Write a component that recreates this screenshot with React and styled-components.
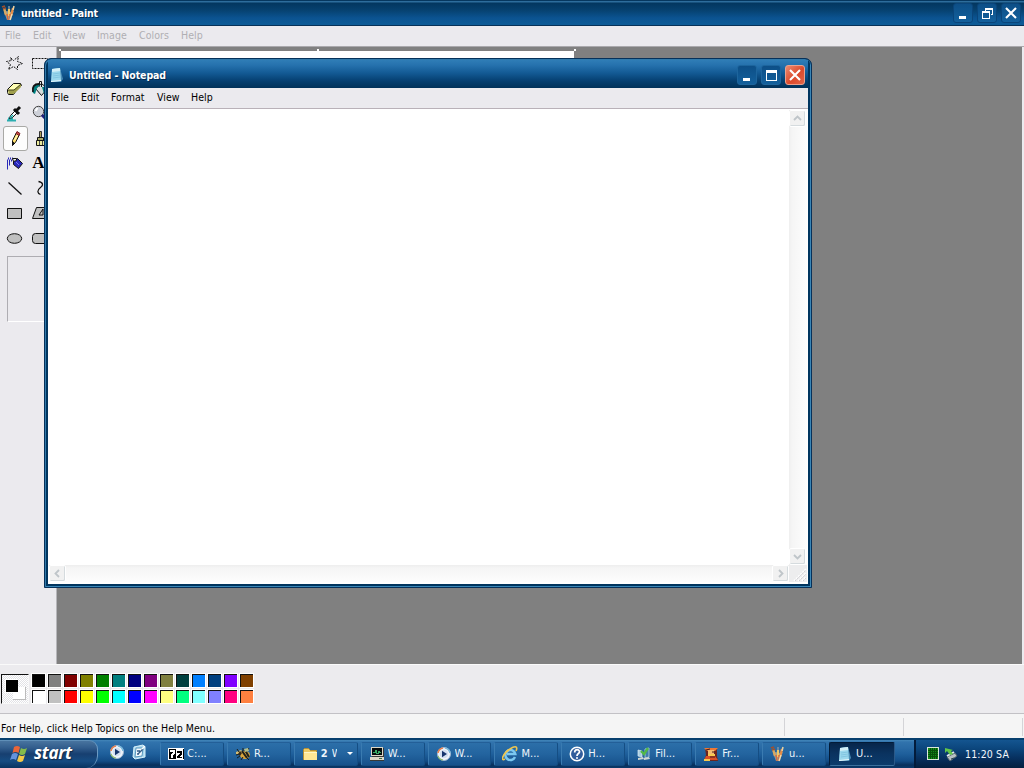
import React from 'react';
import styled, { createGlobalStyle, css } from 'styled-components';

const GlobalStyle = createGlobalStyle`
  * {
    box-sizing: border-box;
  }

  body {
    margin: 0;
    overflow: hidden;
    font-family: 'DejaVu Sans Condensed', 'DejaVu Sans', sans-serif;
    font-stretch: condensed;
    font-size: 10.5px;
    color: #000;
  }

  svg {
    display: block;
    flex: none;
  }
`;

const StyledDesktop = styled.div`
  position: relative;
  display: flex;
  flex-direction: column;
  width: 1024px;
  height: 768px;
  overflow: hidden;
  background: #ebeaee;
`;

const StyledTitleBar = styled.header`
  display: flex;
  align-items: center;
  flex: none;
  height: 26px;
  padding: 0 3px 0 1px;
  border-bottom: 1px solid #063158;
  background: linear-gradient(
    #06375f 0,
    #06375f 1px,
    #2d6d9c 1px,
    #2d6d9c 2px,
    #03365f 3px,
    #06416f 10px,
    #0b5391 18px,
    #0d5b96 24px
  );

  ${({ $floating }) =>
    $floating &&
    css`
      height: 28px;
      padding: 1px 3px 0 1px;
      border-bottom: 0;
      background: linear-gradient(#2f7db6 0, #2672ae 5px, #135a94 13px, #053f70 21px, #003158 28px);
    `}
`;

const StyledTitle = styled.h1`
  flex: 1;
  margin: 0 0 0 4px;
  font-size: 10.5px;
  font-weight: bold;
  line-height: 14px;
  letter-spacing: ${({ $spacing }) => $spacing || -0.2}px;
  color: #fff;
  text-shadow: 1px 1px 0 #032a50;
  white-space: pre;
`;

const StyledWindowButtons = styled.div`
  display: flex;
  gap: 4px;
`;

const StyledWindowButton = styled.button`
  display: flex;
  align-items: center;
  justify-content: center;
  width: 20px;
  height: 20px;
  padding: 0;
  border: 1px solid ${({ $close, $dim }) => ($close ? '#e9a18e' : $dim ? '#0a457a' : '#1d659d')};
  border-radius: 3px;
  background: ${({ $close }) =>
    $close
      ? 'linear-gradient(135deg, #ec8a70, #dc4a2c 55%, #e2654a)'
      : 'linear-gradient(#0d4f87, #13609c)'};
`;

const StyledMenuBar = styled.nav`
  display: flex;
  flex: none;
  height: 20px;
  padding-left: 5px;
  line-height: 19px;
  color: ${({ $inactive }) => ($inactive ? '#b0afb3' : '#000')};
  background: #ebeaee;
`;

const StyledMenuItem = styled.span`
  width: ${({ $width }) => $width}px;
  white-space: nowrap;
  letter-spacing: 0.05px;
`;

const StyledWorkspace = styled.main`
  display: flex;
  flex: none;
  height: 618px;
  border-top: 1px solid #aaa9ad;
`;

const StyledToolBox = styled.aside`
  flex: none;
  width: 57px;
  padding: 4px 3px;
  background: #ebeaee;
  border-right: 1px solid #b6b6ba;
`;

const StyledToolGrid = styled.div`
  display: grid;
  grid-template-columns: 25px 25px;
  grid-auto-rows: 25px;
`;

const StyledTool = styled.div`
  display: flex;
  align-items: center;
  justify-content: center;
  padding: 0 2px 1px 0;
  border: 1px solid ${({ $active }) => ($active ? '#a9a9a6' : 'transparent')};
  border-radius: 3px;
  background: ${({ $active }) => ($active ? '#fdfdfd' : 'transparent')};
`;

const StyledLetter = styled.span`
  padding-right: 2px;
  font-family: 'Liberation Serif', serif;
  font-size: 17px;
  font-weight: bold;
  line-height: 20px;
`;

const StyledToolOptions = styled.div`
  width: 42px;
  height: 66px;
  margin: 5px 0 0 4px;
  border: 1px solid #aeadb2;
  border-right-color: #fff;
  border-bottom-color: #fff;
`;

const StyledCanvasArea = styled.div`
  flex: 1;
  margin-right: 2px;
  padding: 4px 0 0 4px;
  background: #808080;
`;

const StyledSheet = styled.div`
  position: relative;
  width: 513px;
  height: 400px;
  background: #fff;
`;

const StyledHandle = styled.i`
  position: absolute;
  top: -2px;
  left: ${({ $left }) => $left}px;
  width: 2px;
  height: 2px;
  background: #fff;
`;

const StyledColorBox = styled.section`
  display: flex;
  flex: none;
  gap: 2px;
  height: 50px;
  padding: 9px 0 0 1px;
  border-top: 1px solid #fafafa;
  border-bottom: 1px solid #c2c1c5;
  background: #ecebee;
`;

const StyledCurrent = styled.div`
  width: 28px;
  height: 30px;
  border: 1px solid #111;
  border-right-color: #f8f8f8;
  border-bottom-color: #f8f8f8;
  background: repeating-conic-gradient(#fff 0 25%, #e2e2e6 0 50%) 0 0 / 2px 2px;
`;

const StyledPalette = styled.div`
  display: grid;
  grid-template-columns: repeat(14, 16px);
  grid-auto-rows: 16px;
  height: 32px;
  margin-top: -1px;
`;

const StyledSwatch = styled.div`
  width: 15px;
  height: 15px;
  border: 1px solid #fff;
  box-shadow: inset 1px 1px 0 #111;
  background: ${({ $color }) => $color};
`;

const StyledStatusBar = styled.footer`
  display: flex;
  flex: none;
  height: 24px;
  padding: 4px 1px 2px;
  background: #f5f5f5;
  line-height: 20px;
`;

const StyledStatusCell = styled.div`
  width: ${({ $width }) => $width}px;
  border-right: 1px solid #d4d4d7;
  white-space: nowrap;
  letter-spacing: 0.04px;
`;

const StyledTaskBar = styled.div`
  display: flex;
  flex: none;
  height: 30px;
  border-top: 2px solid #07406e;
  background: linear-gradient(
    #4386b9 0,
    #3173ad 2px,
    #296aa5 8px,
    #1e5f9b 14px,
    #124c86 21px,
    #08305d 25px,
    #0b396a 28px
  );
`;

const StyledStart = styled.button`
  display: flex;
  align-items: center;
  gap: 6px;
  width: 98px;
  padding: 0 0 3px 10px;
  border: 0;
  border-top: 1px solid #5f8fb8;
  border-right: 1px solid #6c9bc3;
  border-radius: 0 9px 12px 0;
  background: linear-gradient(#48749f 0, #315c8c 7px, #173f70 13px, #164c82 20px, #07305b 28px);
  color: #fff;
  font: italic bold 17px 'Open Sans', sans-serif;
  line-height: 20px;
  letter-spacing: -0.3px;
  text-shadow: 1px 1px 1px #102947;
`;

const StyledQuickLaunch = styled.div`
  display: flex;
  gap: 6px;
  width: 62px;
  padding: 4px 0 0 11px;
`;

const StyledTasks = styled.div`
  display: flex;
  flex: 1;
  gap: 3px;
  padding-top: 2px;
`;

const StyledTask = styled.button`
  display: flex;
  align-items: center;
  flex: none;
  width: 63.9px;
  height: 24px;
  padding: 0 4px 1px 7px;
  border: 1px solid #235f98;
  border-left-color: #3a7bb1;
  border-right-color: #154e84;
  border-bottom-color: #154b80;
  border-radius: 2px;
  background: linear-gradient(#2c6fa9, #23649f 50%, #17518b);
  color: #eef6fc;
  font: inherit;
  font-size: 11px;
  text-align: left;

  ${({ $active }) =>
    $active &&
    css`
      width: 66px;
      border-color: #021b38 #2b5988 #3c709c #021b38;
      background: linear-gradient(#07264a, #0a3360 50%, #0c3b6b);
    `}

  span {
    flex: 1;
    margin-left: 3px;
    overflow: hidden;
    white-space: nowrap;
  }
`;

const StyledCount = styled.b`
  flex: none;
  margin: 0 4px 0 3px;
`;

const StyledGroupLabel = styled.em`
  width: 7px;
  margin-right: 10px;
  overflow: hidden;
  font-style: normal;
`;

const StyledTray = styled.div`
  display: flex;
  align-items: center;
  width: 110px;
  padding: 0 0 1px 11px;
  border-left: 2px solid #031c3b;
  background: linear-gradient(#145590 0, #0c477e 8px, #07305f 18px, #04203f 28px);
  color: #f2f7fc;
  letter-spacing: 0.15px;
  white-space: nowrap;

  svg + svg {
    margin: 0 7px 0 5px;
  }
`;

const StyledNotepad = styled.section`
  position: absolute;
  top: 58px;
  left: 44px;
  display: flex;
  flex-direction: column;
  width: 768px;
  height: 530px;
  padding: 1px 3px 3px;
  border: 1px solid #06315a;
  border-radius: 7px 7px 0 0;
  background: #00355f;
  box-shadow: inset 1px 1px 0 #317aaa, inset -1px -1px 0 #3a86b6;
  overflow: hidden;
`;

const StyledEditor = styled.div`
  display: grid;
  grid-template-columns: 1fr 18px;
  grid-template-rows: 1fr 17px;
  flex: 1;
  padding: 1px 1px 2px 1px;
  border-top: 1px solid #b9b1b8;
  background: #fff;
`;

const StyledPage = styled.div`
  background: #fff;
`;

const StyledScrollBar = styled.div`
  display: flex;
  flex-direction: ${({ $vertical }) => ($vertical ? 'column' : 'row')};
  justify-content: space-between;
  background: ${({ $vertical }) =>
    $vertical
      ? 'linear-gradient(90deg, #efefef, #f5f5f5 3px, #fdfdfd)'
      : 'linear-gradient(#eeeeee, #f5f5f5 3px, #fdfdfd)'};
`;

const StyledArrow = styled.div`
  display: flex;
  align-items: center;
  justify-content: center;
  width: 17px;
  height: 17px;
  border: 1px solid #fff;
  border-radius: 2px;
  background: #f1f1f1;
  box-shadow: inset -1px -1px 0 #d5dbde;
`;

const StyledCorner = styled.div`
  display: flex;
  align-items: flex-end;
  justify-content: flex-end;
  background: #ededee;
`;

const topColors = [
  '#000000', '#808080', '#800000', '#808000', '#008000', '#008080', '#000080',
  '#800080', '#808040', '#004040', '#0080ff', '#004080', '#8000ff', '#804000',
];

const bottomColors = [
  '#ffffff', '#c0c0c0', '#ff0000', '#ffff00', '#00ff00', '#00ffff', '#0000ff',
  '#ff00ff', '#ffff80', '#00ff80', '#80ffff', '#8080ff', '#ff0080', '#ff8040',
];

const PaintIcon = () => (
  <svg width="16" height="16" viewBox="0 0 16 16">
    <path d="M3 7l3-1 3 1 4-1-2 5-1 4H6z" fill="#8e9fa0" />
    <path d="M5 10L3 3" stroke="#d8a862" strokeWidth="2.4" />
    <path d="M1 2l3-1M2 4l3-1" stroke="#a2502b" strokeWidth="1.6" />
    <path d="M8 11V4" stroke="#f2c765" strokeWidth="2.2" />
    <path d="M8 4V1" stroke="#7f93a5" strokeWidth="1.5" />
    <path d="M10 11l2-8" stroke="#e88c45" strokeWidth="2.2" />
    <path d="M12 5l1-4" stroke="#ead0a0" strokeWidth="1.6" />
    <path d="M6 9l1 6M9 9v6" stroke="#d66b3c" strokeWidth="1.5" />
    <path d="M11 9l-2 6" stroke="#f3dfb0" strokeWidth="1.3" />
  </svg>
);

const NotepadIcon = () => (
  <svg width="16" height="16" viewBox="0 0 16 16">
    <path d="M3 2l8-1 3 11-2 3H2z" fill="#4b8cb5" />
    <path d="M3 2l8-1 1 13-10 1z" fill="#9bd8ed" />
    <path d="M3 2l8-1 .2 3L3 5z" fill="#d3eff7" />
    <path d="M4 7l7-1M4 9l7-1M4 11l7-1" stroke="#77bddb" strokeWidth=".7" />
    <path d="M2 14.5l10-1" stroke="#e8f7fa" />
  </svg>
);

const MinimizeGlyph = () => (
  <svg width="16" height="16" viewBox="0 0 16 16" shapeRendering="crispEdges">
    <path d="M4 11h7v3H4z" fill="#fff" />
  </svg>
);

const MaximizeGlyph = () => (
  <svg width="16" height="16" viewBox="0 0 16 16" shapeRendering="crispEdges">
    <path d="M3 3h11v11H3zM4 6v7h9V6z" fill="#fff" fillRule="evenodd" />
  </svg>
);

const RestoreGlyph = () => (
  <svg width="16" height="16" viewBox="0 0 16 16" shapeRendering="crispEdges">
    <path d="M6 3h8v7h-2V9h1V5H7v1H6zM3 6h8v8H3zM4 8v5h6V8z" fill="#fff" fillRule="evenodd" />
  </svg>
);

const CloseGlyph = () => (
  <svg width="16" height="16" viewBox="0 0 16 16">
    <path d="M3 3l10 10M13 3L3 13" stroke="#fff" strokeWidth="2.1" />
  </svg>
);

const toolIcons = [
  <path key="star" d="M5.5 3.5l3 3 5-4-1 5 5 2-5 2v4l-4-3-5 3 2-5-4-3 5-1z" stroke="#111" strokeDasharray="2 1" />,
  <path key="select" d="M2.5 4.5h15v10h-15z" stroke="#111" strokeDasharray="2 1" />,
  <g key="eraser">
    <path d="M2.5 10.5l6-6h7l1 2-6 6-2 3h-5l-1-2z" fill="#ffffb4" stroke="#111" />
    <path d="M3 11h6v4H4zM9 11l7-6v3l-6 6H9z" fill="#a0a04e" />
    <path d="M3 11h6l7-6" stroke="#44441b" />
  </g>,
  <g key="fill">
    <path d="M5.5 9.5l6-5 6 5-6 7z" fill="#d7dddd" stroke="#111" />
    <path d="M11.5 8V2.5h-2v5" stroke="#111" />
    <path d="M3 14c-1-5 1-9 7-8l-3 3-2 6zM12 8h6l-4 7z" fill="#008080" />
    <path d="M3 13c-1-5 1-8 6-8" stroke="#111" strokeWidth="1.8" />
  </g>,
  <g key="picker">
    <path d="M2 16.5h9M3 14.5h5" stroke="#2caeb0" strokeWidth="2" />
    <path d="M4.5 14.5l1-3 5-5 2 2-5 5z" fill="#fff" stroke="#111" />
    <path d="M9 5l5 5M11 7l4-4" stroke="#111" strokeWidth="3" />
    <path d="M5 14l3-3" stroke="#20b4b4" strokeWidth="1.4" />
  </g>,
  <g key="zoom">
    <circle cx="8.5" cy="7.5" r="5.2" fill="#cdd0d8" stroke="#444" />
    <path d="M5.5 7l2-3" stroke="#fff" strokeWidth="2" />
    <path d="M12 11l5 5" stroke="#202080" strokeWidth="3" />
  </g>,
  <g key="pencil">
    <path d="M7.5 11.5l4-8 3 2-4 8-3 3z" fill="#ffe06d" stroke="#111" />
    <path d="M12 2.5l3 2-1 2-3-2z" fill="#c34848" stroke="#7c1e22" />
    <path d="M7 12l3 2-3 3z" fill="#111" />
    <path d="M9.5 11l3-5" stroke="#fff8ce" />
  </g>,
  <g key="brush">
    <path d="M9.5 2.5h2v6h-2z" fill="#ad9e54" stroke="#333" />
    <path d="M7.5 8.5h6v3h-6z" fill="#a9a96c" stroke="#111" />
    <path d="M6.5 11.5h9v5h-9z" fill="#e9e99c" stroke="#111" />
    <path d="M9.5 12v4M12.5 12v4" stroke="#444" />
  </g>,
  <g key="spray">
    <path d="M3 4.5h6M2 6.5h5M2 8.5h4M2 10.5h4M2 12.5h2M2 14.5h2" stroke="#2929b8" strokeDasharray="1 1" strokeWidth="2" />
    <path d="M8.5 6.5l4-2 5 5-4 5-5-4z" fill="#2929bb" stroke="#111" />
    <path d="M7.5 4.5h4v2l-3 1z" fill="#eee" stroke="#111" />
    <path d="M11 8l3 3" stroke="#7777ee" />
  </g>,
  null,
  <path key="line" d="M3.5 3.5l13 12" stroke="#111" strokeWidth="1.3" />,
  <path key="curve" d="M8.5 2.5c5 1 5 4 2 6-4 3-3 6 0 7" stroke="#111" strokeWidth="1.3" />,
  <path key="rect" d="M2.5 4.5h14v10h-14z" fill="#c0c0c0" stroke="#111" />,
  <path key="polygon" d="M6.5 3.5h11l-1 11h-14zM9 11l4-6v6z" fill="#c0c0c0" stroke="#111" />,
  <ellipse key="ellipse" cx="9.5" cy="9.5" rx="7.2" ry="4.8" fill="#c0c0c0" stroke="#111" />,
  <rect key="rounded" x="2.5" y="4.5" width="15" height="10" rx="3" fill="#c0c0c0" stroke="#111" />,
];

const FlagIcon = () => (
  <svg width="18" height="19" viewBox="0 0 18 19">
    <path d="M4 3q3-2 6 0L8.500 9q-3-2-6 0z" fill="#e96538" />
    <path d="M11 4q3 2 6 0l-2 6q-3 2-6 0z" fill="#84bb4b" />
    <path d="M2 10q3-2 6 0l-2 6q-3-2-6 0z" fill="#6493dc" />
    <path d="M9 11q3 2 6 0l-2 6q-3 2-6 0z" fill="#f5c946" />
  </svg>
);

const MediaIcon = () => (
  <svg width="16" height="16" viewBox="0 0 16 16">
    <circle cx="8" cy="8" r="6.5" fill="#f0f5fb" stroke="#9eb7d1" />
    <path d="M2 7a6 6 0 0 1 5-5" fill="none" stroke="#e78050" strokeWidth="1.6" />
    <path d="M9 2a6 6 0 0 1 5 5" fill="none" stroke="#78b8dc" strokeWidth="1.6" />
    <path d="M2 10a6 6 0 0 0 5 4" fill="none" stroke="#90bd72" strokeWidth="1.2" />
    <circle cx="8" cy="8" r="4.3" fill="#d3e0f1" />
    <path d="M6 4.800L11 8 6 11.200z" fill="#17366d" />
  </svg>
);

const DesktopIcon = () => (
  <svg width="16" height="16" viewBox="0 0 16 16">
    <path d="M3 3l9-2 2 2v10l-10 2-2-2z" fill="#a9d8ef" stroke="#d9f2fa" />
    <path d="M5 4h7l-1 8-7 1z" fill="#f5fbff" stroke="#5696bd" />
    <path d="M7 10l5-5M6 7h3M6 10h2" stroke="#315c87" strokeWidth="1.4" />
    <path d="M11 5l3-3" stroke="#fff" strokeWidth="1.5" />
  </svg>
);

const SevenZipIcon = () => (
  <svg width="16" height="16" viewBox="0 0 16 16" shapeRendering="crispEdges">
    <path d="M0 2h16v12H0z" fill="#fff" />
    <path d="M1 3h7v10H1z" fill="#000" />
    <path d="M2 4h5v3L5 9v3H3V9l2-3H2z" fill="#fff" />
    <path d="M15 3v10" stroke="#000" />
    <path d="M9 5h5v3l-3 3h3v1H9v-2l3-3H9z" fill="#000" />
  </svg>
);

const InsectIcon = () => (
  <svg width="16" height="16" viewBox="0 0 16 16">
    <path d="M1 6l5-2 3 3-3 2-5-1z" fill="#d8bd72" />
    <ellipse cx="10" cy="9" rx="5" ry="4" fill="#d9a53c" />
    <path d="M7 5l5 7M10 4l4 7" stroke="#1f221b" strokeWidth="2" />
    <path d="M5 8L1 9M5 10l-3 2M8 11l-2 3M12 12l2 2M4 6L2 3M12 5l2-3M8 5V2" stroke="#191d1b" />
    <path d="M5 5l2 2-2 3-2-2z" fill="#342b1b" />
    <path d="M9 3l4-1 1 3-4 1z" fill="#b3bd89" />
  </svg>
);

const FolderIcon = () => (
  <svg width="16" height="16" viewBox="0 0 16 16">
    <path d="M1.5 3.5l1-1h4l2 2h6v9h-13z" fill="#edca65" stroke="#b89033" />
    <path d="M2 6h13v8H2z" fill="#ffe794" />
    <path d="M2 6.5h13" stroke="#fff6c9" />
  </svg>
);

const MonitorIcon = () => (
  <svg width="16" height="16" viewBox="0 0 16 16" shapeRendering="crispEdges">
    <path d="M2 1h12v9H2zM1 11h14v4H1z" fill="#ded8c8" />
    <path d="M3 2h10v7H3z" fill="#050b0c" />
    <path d="M4 6h2V4h1v3h2V5h1v1h2" stroke="#39a863" fill="none" />
    <path d="M3 10.5h11M1 14.5h14M14.5 2v9" stroke="#393936" />
    <path d="M10 12.5h3" stroke="#3d6d48" />
  </svg>
);

const ExplorerIcon = () => (
  <svg width="16" height="16" viewBox="0 0 16 16">
    <path d="M13 11a5 5 0 1 1 .3-3H5" fill="none" stroke="#7cc8f0" strokeWidth="2.5" />
    <path d="M3 13C-2 16 1 7 8 3c6-4 8-2 6 2" fill="none" stroke="#efc64f" strokeWidth="1.6" />
  </svg>
);

const HelpIcon = () => (
  <svg width="16" height="16" viewBox="0 0 16 16">
    <circle cx="8" cy="8" r="6.7" fill="#315d9c" stroke="#fff" strokeWidth="1.5" />
    <path d="M5.700 6.400c0-4 5-3 4.800-.6C10.500 7.700 8 7.400 8 10" fill="none" stroke="#fff" strokeWidth="1.8" />
    <circle cx="8" cy="12" r="1" fill="#fff" />
  </svg>
);

const NetworkIcon = () => (
  <svg width="16" height="16" viewBox="0 0 16 16">
    <path d="M2 4l4 1v6l-4-1z" fill="#a9cee2" stroke="#e0edf3" strokeWidth=".7" />
    <path d="M9 3l4-1v9l-4 1z" fill="#427eac" stroke="#cadfe8" strokeWidth=".7" />
    <path d="M2 12l5-1 1 2-6 1zM8 12l5-1 1 2-6 1z" fill="#ced6d3" />
    <path d="M5 5l3 3 4-6" fill="none" stroke="#51b847" strokeWidth="2.4" />
  </svg>
);

const CharacterIcon = () => (
  <svg width="16" height="16" viewBox="0 0 16 16">
    <path d="M2 2h12v8l1 5H1l2-6z" fill="#6d251e" />
    <path d="M1 2h14l-3 3H4z" fill="#ed7834" />
    <path d="M5 4h6v4H8L5 9z" fill="#f5bb6f" />
    <path d="M3 10h9l3 4H1z" fill="#da5028" />
    <path d="M5 8h7v2H5zM1 13h6v2H1z" fill="#f6ca4f" />
    <path d="M3 4l4-1M9 6h2M7 11h5" stroke="#421b1c" />
  </svg>
);

const GridIcon = () => (
  <svg width="12" height="13" viewBox="0 0 12 13" shapeRendering="crispEdges">
    <path d="M.5.5h11v12H.5z" fill="#128a18" stroke="#dce8db" />
    <path d="M3.5 1v11M5.5 1v11M7.5 1v11M9.5 1v11M1 3.5h10M1 5.5h10M1 7.5h10M1 9.500h10" stroke="#07500b" />
  </svg>
);

const EjectIcon = () => (
  <svg width="14" height="16" viewBox="0 0 14 16">
    <path d="M3 11l8-4 2 3-7 5z" fill="#b9c2c4" stroke="#53646e" />
    <path d="M3 10l7-4" stroke="#e2e9eb" strokeWidth="2" />
    <path d="M1 2l8 2-2 1 2 3-3 1-3-4-2 2z" fill="#61c64a" />
    <path d="M7 13l3-1" stroke="#304653" />
  </svg>
);

const ArrowGlyph = ({ turn = 0 }) => (
  <svg width="11" height="11" viewBox="0 0 11 11">
    <path
      d="M2 7l3.5-3.5L9 7"
      fill="none"
      stroke="#bfc5c9"
      strokeWidth="1.8"
      transform={`rotate(${turn} 5.5 5.5)`}
    />
  </svg>
);

const paintMenu = [
  ['File', 28],
  ['Edit', 30],
  ['View', 34],
  ['Image', 42],
  ['Colors', 42],
  ['Help', 30],
];

const notepadMenu = [
  ['File', 28],
  ['Edit', 30],
  ['Format', 46],
  ['View', 34],
  ['Help', 30],
];

const tasks = [
  { icon: <SevenZipIcon />, label: 'C:...' },
  { icon: <InsectIcon />, label: 'R...' },
  { icon: <FolderIcon />, label: 'W', count: '2' },
  { icon: <MonitorIcon />, label: 'W...' },
  { icon: <MediaIcon />, label: 'W...' },
  { icon: <ExplorerIcon />, label: 'M...' },
  { icon: <HelpIcon />, label: 'H...' },
  { icon: <NetworkIcon />, label: 'Fil...' },
  { icon: <CharacterIcon />, label: 'Fr...' },
  { icon: <PaintIcon />, label: 'u...' },
  { icon: <NotepadIcon />, label: 'U...', active: true },
];

const Paint = () => (
  <>
    <StyledTitleBar>
      <PaintIcon />
      <StyledTitle>untitled - Paint</StyledTitle>
      <StyledWindowButtons>
        <StyledWindowButton $dim aria-label="Minimize"><MinimizeGlyph /></StyledWindowButton>
        <StyledWindowButton $dim aria-label="Restore"><RestoreGlyph /></StyledWindowButton>
        <StyledWindowButton $dim aria-label="Close"><CloseGlyph /></StyledWindowButton>
      </StyledWindowButtons>
    </StyledTitleBar>
    <StyledMenuBar $inactive>
      {paintMenu.map(([label, width]) => (
        <StyledMenuItem key={label} $width={width}>{label}</StyledMenuItem>
      ))}
    </StyledMenuBar>
    <StyledWorkspace>
      <StyledToolBox>
        <StyledToolGrid>
          {toolIcons.map((icon, i) => (
            <StyledTool key={i} $active={i === 6}>
              {icon ? (
                <svg width="19" height="19" viewBox="0 0 19 19" fill="none">{icon}</svg>
              ) : (
                <StyledLetter>A</StyledLetter>
              )}
            </StyledTool>
          ))}
        </StyledToolGrid>
        <StyledToolOptions />
      </StyledToolBox>
      <StyledCanvasArea>
        <StyledSheet>
          <StyledHandle $left={-2} />
          <StyledHandle $left={256} />
          <StyledHandle $left={513} />
        </StyledSheet>
      </StyledCanvasArea>
    </StyledWorkspace>
    <StyledColorBox>
      <StyledCurrent>
        <svg width="26" height="28" viewBox="0 0 26 28" shapeRendering="crispEdges">
          <path d="M11 12h12v13H11z" fill="#fff" />
          <path d="M11 24.5h12.5V12" fill="none" stroke="#bbb" />
          <path d="M3 4h13v14H3z" fill="#fff" />
          <path d="M4 5h12v12H4z" fill="#000" />
        </svg>
      </StyledCurrent>
      <StyledPalette>
        {[...topColors, ...bottomColors].map(color => (
          <StyledSwatch key={color} $color={color} />
        ))}
      </StyledPalette>
    </StyledColorBox>
    <StyledStatusBar>
      <StyledStatusCell $width={784}>For Help, click Help Topics on the Help Menu.</StyledStatusCell>
      <StyledStatusCell $width={119} />
      <StyledStatusCell $width={119} />
    </StyledStatusBar>
  </>
);

const Notepad = () => (
  <StyledNotepad>
    <StyledTitleBar $floating>
      <NotepadIcon />
      <StyledTitle $spacing={-0.1}>Untitled - Notepad</StyledTitle>
      <StyledWindowButtons>
        <StyledWindowButton aria-label="Minimize"><MinimizeGlyph /></StyledWindowButton>
        <StyledWindowButton aria-label="Maximize"><MaximizeGlyph /></StyledWindowButton>
        <StyledWindowButton $close aria-label="Close"><CloseGlyph /></StyledWindowButton>
      </StyledWindowButtons>
    </StyledTitleBar>
    <StyledMenuBar>
      {notepadMenu.map(([label, width]) => (
        <StyledMenuItem key={label} $width={width}>{label}</StyledMenuItem>
      ))}
    </StyledMenuBar>
    <StyledEditor>
      <StyledPage />
      <StyledScrollBar $vertical>
        <StyledArrow><ArrowGlyph /></StyledArrow>
        <StyledArrow><ArrowGlyph turn={180} /></StyledArrow>
      </StyledScrollBar>
      <StyledScrollBar>
        <StyledArrow><ArrowGlyph turn={-90} /></StyledArrow>
        <StyledArrow><ArrowGlyph turn={90} /></StyledArrow>
      </StyledScrollBar>
      <StyledCorner>
        <svg width="15" height="15" viewBox="0 0 15 15">
          <path d="M2 14L14 2M6 14l8-8M10 14l4-4" stroke="#fff" strokeWidth="1.6" strokeDasharray="2 1" />
          <path d="M3 14L14 3M7 14l7-7M11 14l3-3" stroke="#cfced3" strokeDasharray="2 1" />
        </svg>
      </StyledCorner>
    </StyledEditor>
  </StyledNotepad>
);

const TaskBar = () => (
  <StyledTaskBar>
    <StyledStart>
      <FlagIcon />
      start
    </StyledStart>
    <StyledQuickLaunch>
      <MediaIcon />
      <DesktopIcon />
    </StyledQuickLaunch>
    <StyledTasks>
      {tasks.map(({ icon, label, count, active }, i) => (
        <StyledTask key={i} $active={active}>
          {icon}
          {count ? (
            <>
              <StyledCount>{count}</StyledCount>
              <StyledGroupLabel>{label}</StyledGroupLabel>
              <svg width="6" height="3" viewBox="0 0 6 3">
                <path d="M0 0h6L3 3z" fill="#fff" />
              </svg>
            </>
          ) : (
            <span>{label}</span>
          )}
        </StyledTask>
      ))}
    </StyledTasks>
    <StyledTray>
      <GridIcon />
      <EjectIcon />
      11:20 SA
    </StyledTray>
  </StyledTaskBar>
);

const App = () => (
  <>
    <GlobalStyle />
    <StyledDesktop>
      <Paint />
      <TaskBar />
      <Notepad />
    </StyledDesktop>
  </>
);

export default App;
